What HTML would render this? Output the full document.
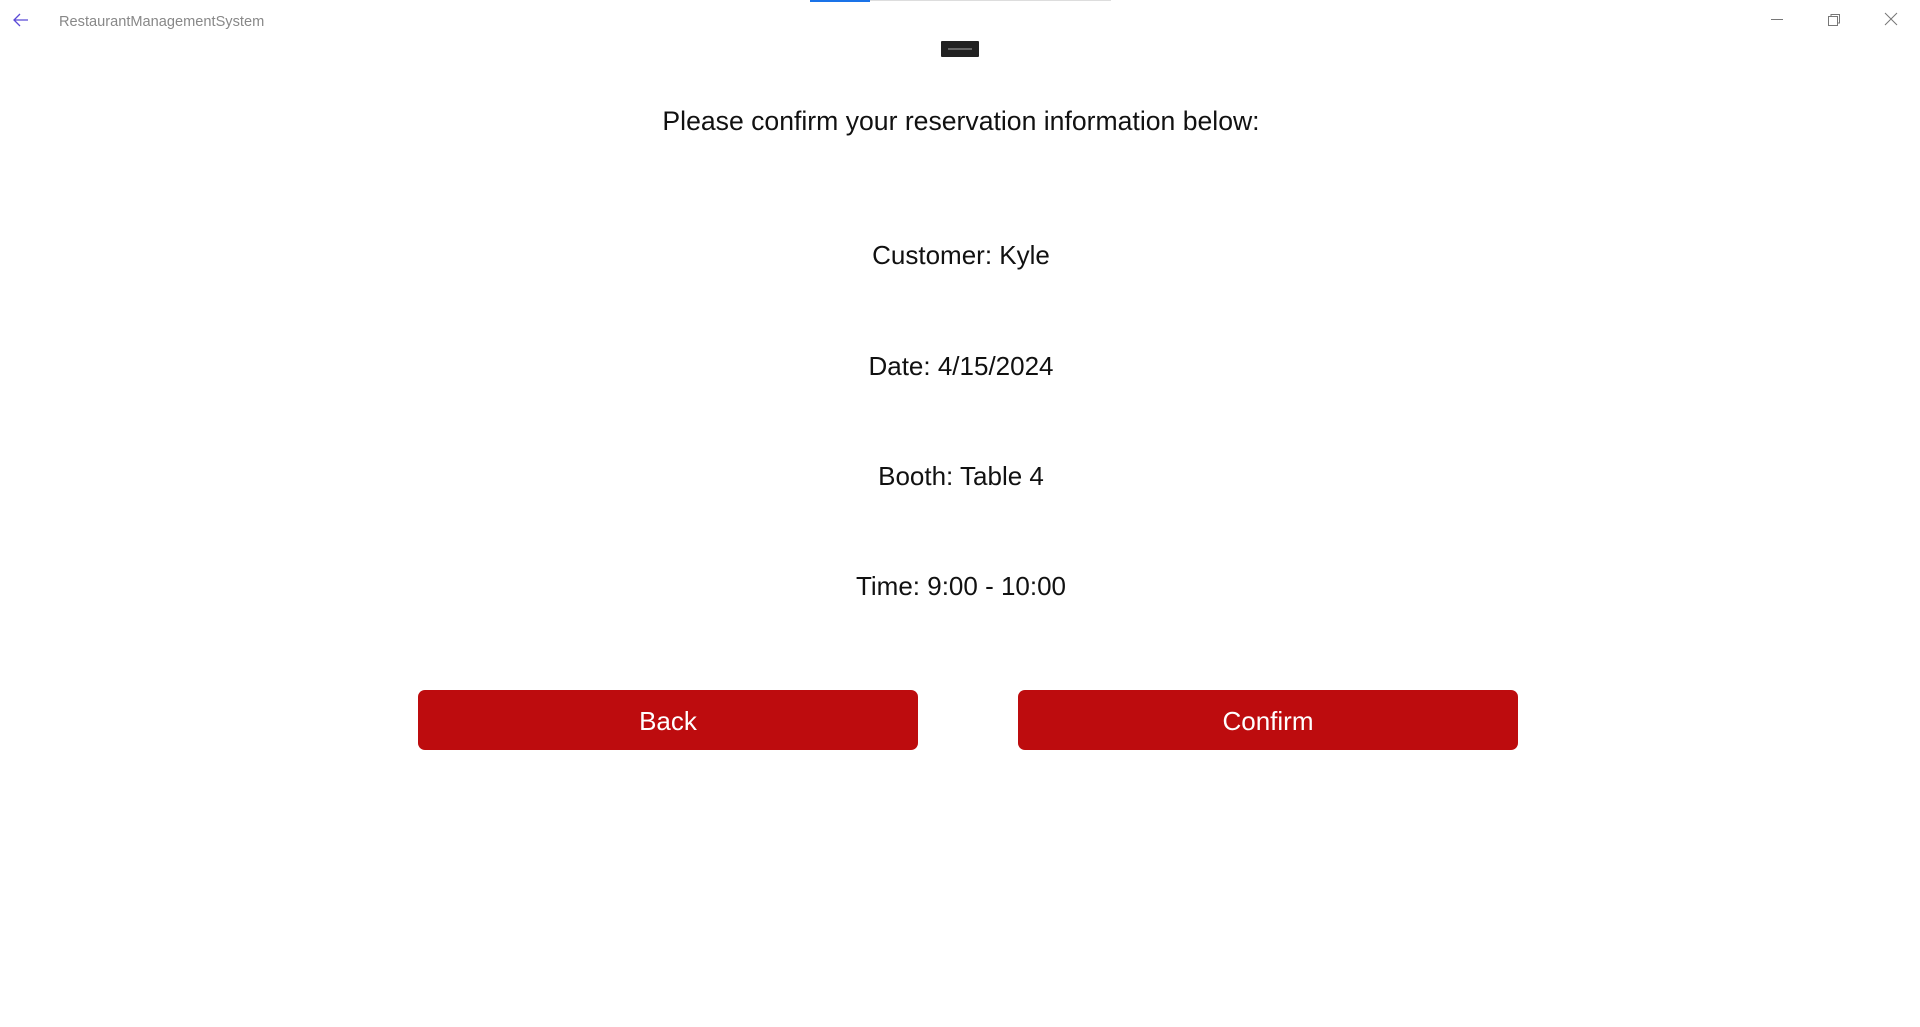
<!DOCTYPE html>
<html><head><meta charset="utf-8"><style>
html,body{margin:0;padding:0;width:1920px;height:1027px;background:#fff;overflow:hidden;font-family:"Liberation Sans",sans-serif;position:relative}
.a{position:absolute}
.t{position:absolute;left:0;width:1922px;text-align:center;font-size:26px;color:#111;line-height:30px}
.btn{position:absolute;top:690px;height:60px;width:500px;background:#bd0c0e;border-radius:7px;color:#fff;font-size:26px;line-height:62px;text-align:center}
</style></head><body>
<div class="a" style="left:810px;top:0;width:301px;height:1px;background:#ddd"></div>
<div class="a" style="left:810px;top:0;width:60px;height:2px;background:#1a73e8"></div>
<svg class="a" style="left:12px;top:12px" width="18" height="16"><path d="M16 8H2M8 2L2 8l6 6" stroke="#5b4ad6" stroke-width="1.3" fill="none"/></svg>
<div class="a" style="left:59px;top:14px;font-size:14.6px;color:#888">RestaurantManagementSystem</div>
<svg class="a" style="left:1765px;top:8px" width="150" height="24">
<path d="M6 11.5h12" stroke="#777" stroke-width="1"/>
<rect x="63.5" y="8.5" width="9" height="9" fill="none" stroke="#777"/><path d="M66 8V6.5h8.5V15H73" fill="none" stroke="#777"/>
<path d="M120 5l12 12M132 5l-12 12" stroke="#777" stroke-width="1"/>
</svg>
<div class="a" style="left:941px;top:41px;width:38px;height:16px;background:#222;border-radius:1px"></div>
<div class="a" style="left:948px;top:48px;width:24px;height:2px;background:#666"></div>
<div class="t" style="top:106px;font-size:26.6px">Please confirm your reservation information below:</div>
<div class="t" style="top:240px">Customer: Kyle</div>
<div class="t" style="top:351px">Date: 4/15/2024</div>
<div class="t" style="top:461px">Booth: Table 4</div>
<div class="t" style="top:571px">Time: 9:00 - 10:00</div>
<div class="btn" style="left:418px">Back</div>
<div class="btn" style="left:1018px">Confirm</div>
</body></html>
